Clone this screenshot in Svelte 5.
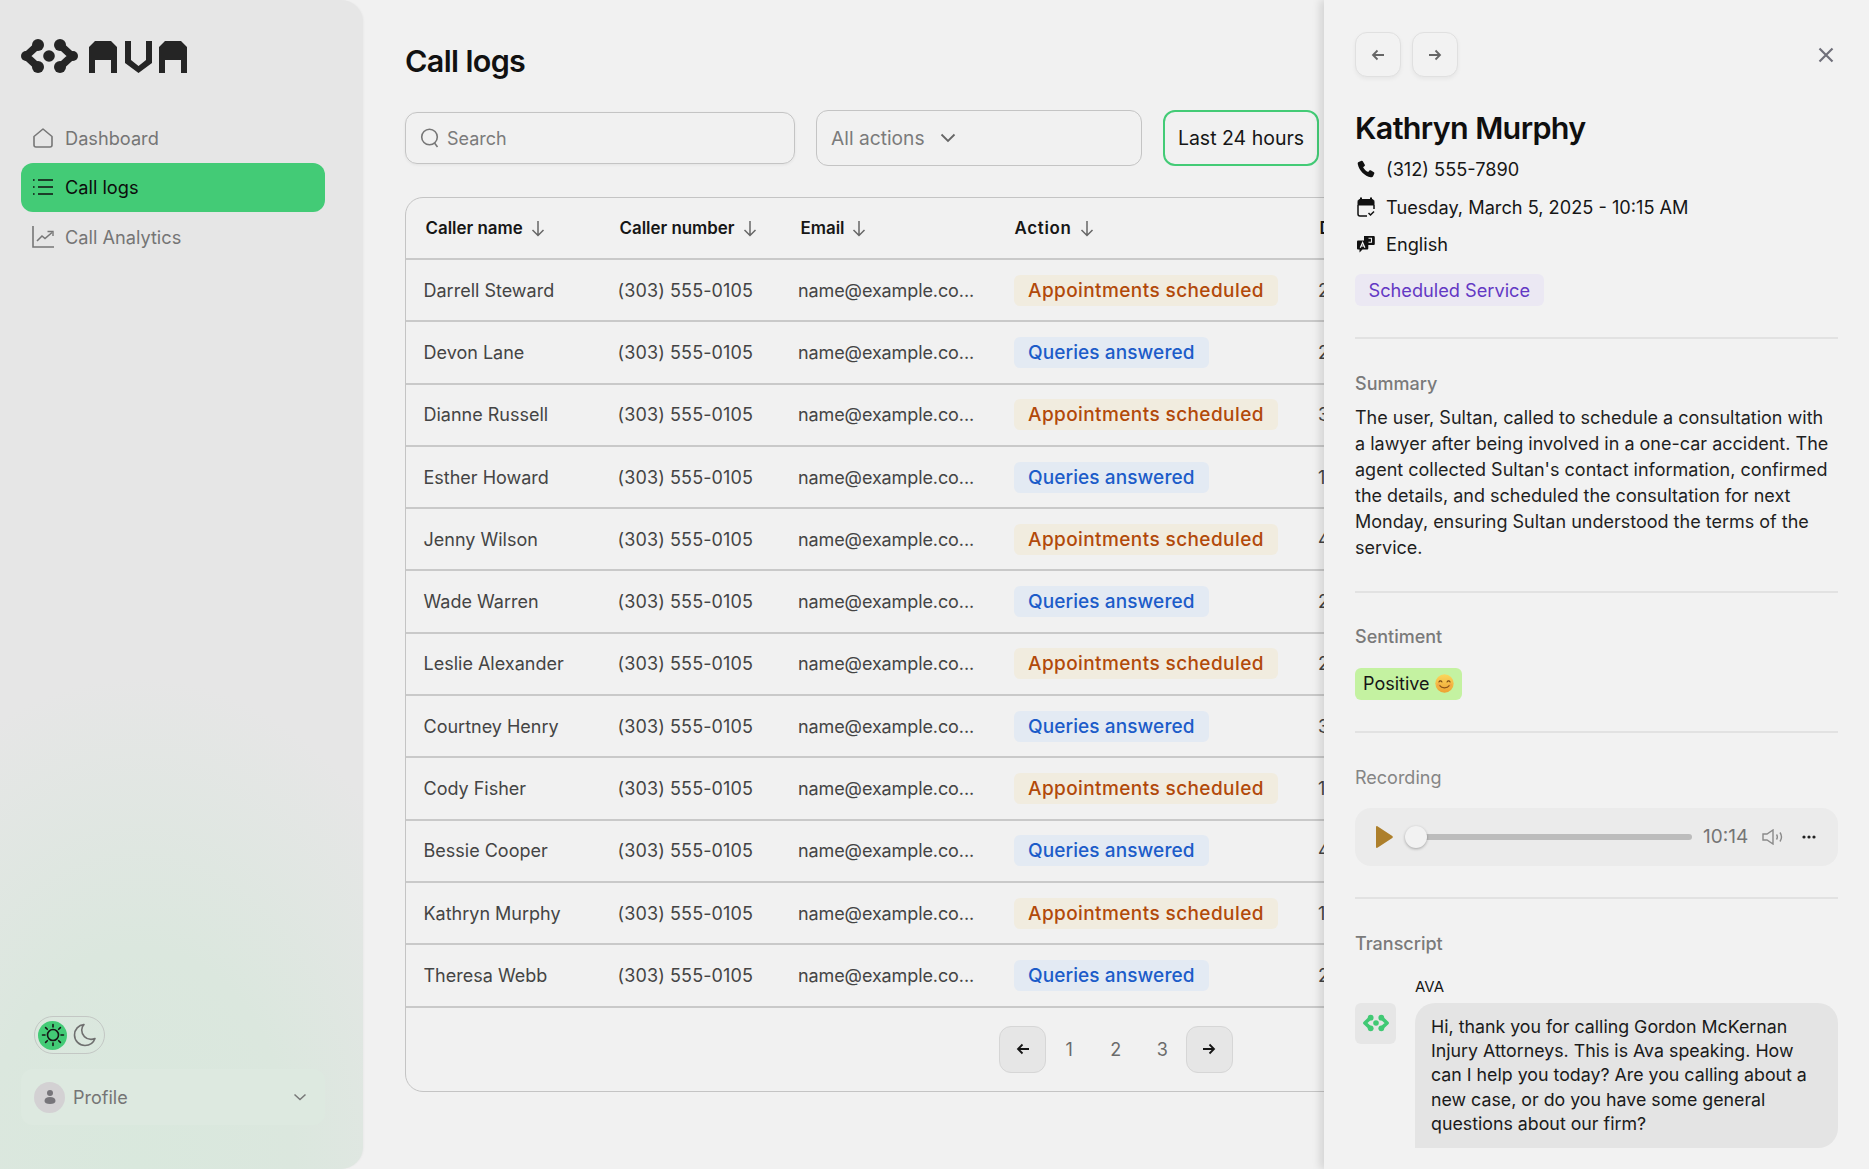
<script>
  const names = ['Darrell Steward','Devon Lane','Dianne Russell','Esther Howard','Jenny Wilson','Wade Warren','Leslie Alexander','Courtney Henry','Cody Fisher','Bessie Cooper','Kathryn Murphy','Theresa Webb'];
  const mins = ['2','2','3','1','4','2','2','3','1','4','1','2'];
  const rows = names.map((name, i) => ({ name, dur: mins[i] + 'm', appt: i % 2 === 0 }));
  const headers = ['Caller name','Caller number','Email','Action','Duration'];
</script>

<div class="page">
  <aside class="side">
    <svg class="logo" viewBox="20 38 170 38" width="170" height="38" aria-label="AVA">
      <g fill="none" stroke="#252525" stroke-width="7.5" stroke-linejoin="round" stroke-linecap="round">
        <polyline points="38,45 26,56 38,67" />
        <polyline points="60,45 72,56 60,67" />
      </g>
      <g fill="#252525">
        <circle cx="38" cy="45" r="6" /><circle cx="38" cy="67" r="6" /><circle cx="26" cy="56" r="5" />
        <circle cx="60" cy="45" r="6" /><circle cx="60" cy="67" r="6" /><circle cx="73" cy="56" r="5" />
        <circle cx="49" cy="56" r="5.8" />
        <polygon points="89,47 95,41 111,41 117,47 117,73 111,73 111,60 95,60 95,73 89,73" />
        <polygon points="125,41 131,41 131,60 138.5,66 146,60 146,41 152,41 152,63 138.5,73 125,63" />
        <polygon points="159,47 165,41 181,41 187,47 187,73 181,73 181,60 165,60 165,73 159,73" />
      </g>
    </svg>
    <nav class="nav">
      <div class="item">
        <svg width="22" height="22" viewBox="0 0 22 22" fill="none" stroke="#777" stroke-width="1.6" stroke-linejoin="round"><path d="M2 9.5 11 2l9 7.5V18a2 2 0 0 1-2 2H4a2 2 0 0 1-2-2z"/></svg>
        <span>Dashboard</span>
      </div>
      <div class="item active">
        <svg width="22" height="22" viewBox="0 0 22 22" fill="none" stroke="#111" stroke-width="1.7"><path d="M6 4h15M6 11h15M6 18h15"/><path d="M1 4h1.6M1 11h1.6M1 18h1.6"/></svg>
        <span>Call logs</span>
      </div>
      <div class="item">
        <svg width="22" height="22" viewBox="0 0 22 22" fill="none" stroke="#777" stroke-width="1.6"><path d="M1 0v21h21"/><path d="m5 15 5-5 3 2.5 7-6"/><path d="M15.5 5.500H21V10" stroke-width="1.4"/></svg>
        <span>Call Analytics</span>
      </div>
    </nav>
    <div class="bottom">
      <div class="toggle">
        <span class="sun">
          <svg width="24" height="24" viewBox="0 0 24 24" fill="none" stroke="#161616" stroke-width="1.6" stroke-linecap="round"><circle cx="12" cy="12" r="5.5"/><path d="M12 1.500v2.500M12 20v2.500M1.500 12H4M20 12h2.500M4.600 4.600l1.700 1.700M17.700 17.700l1.700 1.700M4.600 19.400l1.700-1.700M17.700 6.300l1.700-1.700"/></svg>
        </span>
        <svg width="24" height="24" viewBox="0 0 24 24" fill="none" stroke="#6f6f6f" stroke-width="1.6" stroke-linejoin="round"><path d="M11 1.500C5.500 2 1.500 6.500 1.500 12c0 5.800 4.700 10.500 10.500 10.500 4.500 0 8.500-2.800 10-7-1.200.6-2.600.9-4 .9-5.200 0-9.300-4.200-9.300-9.300 0-2.200.9-4.500 2.300-5.600z"/></svg>
      </div>
      <div class="profile">
        <span class="avatar">
          <svg width="14" height="16" viewBox="0 0 14 16" fill="#77757a"><circle cx="7" cy="4" r="3"/><path d="M1.500 12c0-2.500 2-4 5.500-4s5.500 1.500 5.500 4c0 2-2 3-5.500 3s-5.500-1-5.500-3z"/></svg>
        </span>
        <span class="pname">Profile</span>
        <svg class="chev" width="14" height="8" viewBox="0 0 14 8" fill="none" stroke="#777" stroke-width="1.5"><path d="m1.500 1.500 5.500 5 5.500-5"/></svg>
      </div>
    </div>
  </aside>

  <main class="main">
    <h1>Call logs</h1>
    <div class="tools">
      <div class="search">
        <svg width="20" height="22" viewBox="0 0 20 22" fill="none" stroke="#777" stroke-width="1.6"><circle cx="9.5" cy="10" r="7.8"/><path d="m14.500 16 3 4"/></svg>
        <span>Search</span>
      </div>
      <div class="select">
        <span>All actions</span>
        <svg width="16" height="10" viewBox="0 0 16 10" fill="none" stroke="#666" stroke-width="1.8"><path d="m1.500 1.500 6.500 6.500 6.500-6.500"/></svg>
      </div>
      <div class="range">Last 24 hours</div>
    </div>

    <div class="table">
      <div class="head">
        {#each headers as h}
          <div class="th">
            <span>{h}</span>
            <svg width="14" height="17" viewBox="0 0 14 17" fill="none" stroke="#666" stroke-width="1.5"><path d="M7 1v14.500M1.500 10 7 15.500 12.500 10"/></svg>
          </div>
        {/each}
      </div>
      {#each rows as r}
        <div class="row">
          <div>{r.name}</div>
          <div class="phone">(303) 555-0105</div>
          <div class="email">name@example.co...</div>
          <div><span class="badge" class:appt={r.appt} class:query={!r.appt}>{r.appt ? 'Appointments scheduled' : 'Queries answered'}</span></div>
          <div>{r.dur}</div>
        </div>
      {/each}
      <div class="pager">
        <button class="pbtn" aria-label="Previous">
          <svg width="14" height="12" viewBox="0 0 14 12" fill="none" stroke="#161616" stroke-width="1.8"><path d="M13 6H2M6.500 1.500 2 6l4.500 4.500"/></svg>
        </button>
        <span class="num">1</span><span class="num">2</span><span class="num">3</span>
        <button class="pbtn" aria-label="Next">
          <svg width="14" height="12" viewBox="0 0 14 12" fill="none" stroke="#161616" stroke-width="1.8"><path d="M1 6h11M7.500 1.500 12 6l-4.500 4.500"/></svg>
        </button>
      </div>
    </div>
  </main>

  <section class="panel">
    <div class="ptop">
      <button class="nbtn" aria-label="Previous">
        <svg width="14" height="12" viewBox="0 0 14 12" fill="none" stroke="#666" stroke-width="1.8"><path d="M13 6H2M6.500 1.500 2 6l4.500 4.500"/></svg>
      </button>
      <button class="nbtn" aria-label="Next">
        <svg width="14" height="12" viewBox="0 0 14 12" fill="none" stroke="#666" stroke-width="1.8"><path d="M1 6h11M7.500 1.500 12 6l-4.500 4.500"/></svg>
      </button>
      <svg class="close" width="16" height="16" viewBox="0 0 16 16" fill="none" stroke="#70707a" stroke-width="2.2"><path d="m1.500 1.500 13 13M14.500 1.500l-13 13"/></svg>
    </div>
    <h2>Kathryn Murphy</h2>
    <div class="meta first">
      <svg width="18" height="18" viewBox="0 0 18 18" fill="#111"><path d="M4.500.8 1.700 2C.8 2.400.6 3.200.8 4.200 2 10.300 7.700 16.100 13.800 17.300c1 .2 1.900-.1 2.300-1l1.200-2.700c.2-.5 0-1-.4-1.300l-3.200-2c-.4-.3-1-.2-1.300.2l-1.200 1.500C8.900 11 7 9 6.100 7.200l1.500-1.200c.4-.3.500-.9.200-1.300l-2-3.500C5.500.8 5 .6 4.500.8z"/></svg>
      <span>(312) 555-7890</span>
    </div>
    <div class="meta">
      <svg width="18" height="20" viewBox="0 0 18 20" fill="none"><path d="M4 .5v3M14 .5v3" stroke="#111" stroke-width="2"/><path d="M1 8V4.500C1 3.300 1.800 2.500 3 2.500h12c1.200 0 2 .8 2 2V8z" fill="#111" stroke="#111"/><path d="M1 8v9c0 1.200.8 2 2 2h7M17 8v4" stroke="#111" stroke-width="1.5"/><path d="m11.500 16 2 2 3.500-3.500" stroke="#111" stroke-width="1.5"/></svg>
      <span>Tuesday, March 5, 2025 - 10:15 AM</span>
    </div>
    <div class="meta">
      <svg width="18" height="18" viewBox="0 0 18 18"><path d="M7 1h9.500c.8 0 1.300.5 1.300 1.300v6.500c0 .8-.5 1.300-1.300 1.300H9V6H7z" fill="#111"/><path d="M1.300 5.500H10c.8 0 1.300.5 1.300 1.300v6.500c0 .8-.5 1.300-1.300 1.300H5.500L2.500 17.500v-2.900h-1.200c-.8 0-1.300-.5-1.300-1.300V6.800c0-.8.5-1.300 1.300-1.300z" fill="#111"/><path d="M3.300 12.800 5.600 7.500l2.300 5.300M4.200 11h2.800" fill="none" stroke="#f2f2f2" stroke-width="1.2"/><path d="M11.500 3.300h3v4h-3" fill="none" stroke="#f2f2f2" stroke-width="1.1"/></svg>
      <span>English</span>
    </div>
    <div class="tag">Scheduled Service</div>

    <hr class="d1" />
    <div class="label l1">Summary</div>
    <p class="summary">The user, Sultan, called to schedule a consultation with a lawyer after being involved in a one-car accident. The agent collected Sultan's contact information, confirmed the details, and scheduled the consultation for next Monday, ensuring Sultan understood the terms of the service.</p>

    <hr class="d2" />
    <div class="label l1 senti">Sentiment</div>
    <div class="positive">
      <span>Positive</span>
      <svg width="19" height="19" viewBox="0 0 18 18">
        <defs><linearGradient id="em" x1="0" y1="0" x2="0" y2="1"><stop offset="0" stop-color="#fbd75c"/><stop offset="1" stop-color="#eea232"/></linearGradient></defs>
        <circle cx="9" cy="9" r="8.7" fill="url(#em)"/>
        <path d="M3.700 7.500c.7-1.300 2.200-1.300 2.900 0M11.400 7.500c.7-1.300 2.200-1.300 2.900 0" fill="none" stroke="#7a4a14" stroke-width="1" stroke-linecap="round"/>
        <path d="M4.500 11c1.800 2.800 7.200 2.800 9 0" fill="none" stroke="#8a5318" stroke-width="1.100" stroke-linecap="round"/>
        <circle cx="3.400" cy="10.300" r="1.500" fill="#f0904a" opacity=".4"/><circle cx="14.600" cy="10.300" r="1.500" fill="#f0904a" opacity=".4"/>
      </svg>
    </div>

    <hr class="d3" />
    <div class="label l2">Recording</div>
    <div class="player">
      <svg class="play" width="17" height="22" viewBox="0 0 17 22" fill="#ad7f2b"><path d="M0 1v20c0 .8.700 1.200 1.400.8L16.300 12c.7-.4.700-1.500 0-2L1.400.2C.7-.2 0 .2 0 1z"/></svg>
      <div class="slider"><span class="thumb"></span></div>
      <span class="time">10:14</span>
      <svg class="vol" width="22" height="16" viewBox="0 0 22 16" fill="none" stroke="#8a8a8a" stroke-width="1.4"><path d="M1 5h4l6-4v14l-6-4H1z"/><path d="M14.500 5.500c1 1.500 1 3.500 0 5M18 3.500c2 3 2 6 0 9"/></svg>
      <svg class="dots" width="14" height="4" viewBox="0 0 14 4" fill="#222"><circle cx="2" cy="2" r="1.6"/><circle cx="7" cy="2" r="1.6"/><circle cx="12" cy="2" r="1.6"/></svg>
    </div>

    <hr class="d4" />
    <div class="label l1">Transcript</div>
    <div class="who">AVA</div>
    <div class="msg">
      <span class="bot">
        <svg width="28" height="18" viewBox="20 38 58 36">
          <g fill="none" stroke="#41c974" stroke-width="7.5" stroke-linejoin="round" stroke-linecap="round"><polyline points="38,45 26,56 38,67"/><polyline points="60,45 72,56 60,67"/></g>
          <g fill="#41c974"><circle cx="38" cy="45" r="6"/><circle cx="38" cy="67" r="6"/><circle cx="60" cy="45" r="6"/><circle cx="60" cy="67" r="6"/><circle cx="49" cy="56" r="5.8"/></g>
        </svg>
      </span>
      <div class="bubble">Hi, thank you for calling Gordon McKernan<br />Injury Attorneys. This is Ava speaking. How<br />can I help you today? Are you calling about a<br />new case, or do you have some general<br />questions about our firm?</div>
    </div>
  </section>
</div>

<style>
  :global(body) { margin: 0; background: #f1f1f1; font-family: Inter, "Noto Sans", sans-serif; overflow: hidden; }
  .page { position: relative; display: flex; height: 1169px; overflow: hidden; background: #f1f1f1; }
  .side {
    width: 363px; flex: none; box-sizing: border-box; padding: 38px 38px 44px 21px;
    display: flex; flex-direction: column; border-radius: 0 22px 22px 0;
    background: radial-gradient(ellipse 95% 42% at 38% 100%, #d9e8dd 0%, #dbe7de 45%, rgba(220,231,223,.5) 75%, rgba(230,230,230,0) 100%), #e6e6e6;
    box-shadow: 1px 0 2px rgba(0,0,0,.03);
  }
  .logo { display: block; margin-left: -1px; }
  .nav { margin-top: 37px; display: flex; flex-direction: column; gap: 0; }
  .item { height: 49.5px; display: flex; align-items: center; gap: 11px; padding-left: 11px; border-radius: 12px; font-size: 18.2px; color: #757575; }
  .item.active { background: #43cb76; color: #0c0c0c; }
  .bottom { margin-top: auto; }
  .toggle { width: 71px; height: 38px; box-sizing: border-box; margin-left: 13px; border: 1px solid #c3c7c4; border-radius: 19px; display: flex; align-items: center; gap: 6px; padding-left: 3px; }
  .sun { width: 29px; height: 29px; border-radius: 50%; background: #43cb76; display: flex; align-items: center; justify-content: center; }
  .profile { margin-top: 15px; height: 56px; border-radius: 12px; background: #dde9e0; display: flex; align-items: center; padding: 0 18px 0 13px; font-size: 18px; color: #757575; }
  .avatar { width: 31px; height: 31px; border-radius: 50%; background: #d3d1d3; display: flex; align-items: center; justify-content: center; }
  .pname { margin-left: 8px; }
  .chev { margin-left: auto; }

  .main { flex: 1; min-width: 0; padding: 37px 41px 0 42px; }
  h1 { margin: 0; font-size: 30.5px; line-height: 48px; font-weight: 600; letter-spacing: -0.65px; color: #111; }
  .tools { margin-top: 25px; display: flex; align-items: center; height: 56px; font-size: 18px; }
  .search { width: 390px; height: 52px; box-sizing: border-box; border: 1.5px solid #c4c4c4; border-radius: 12px; display: flex; align-items: center; gap: 7px; padding-left: 14px; color: #7b7b7b; box-shadow: 0 1px 3px rgba(0,0,0,.06); }
  .select { margin-left: 21px; width: 326px; height: 56px; box-sizing: border-box; border: 1.5px solid #c4c4c4; border-radius: 12px; display: flex; align-items: center; gap: 15px; padding-left: 14px; color: #7b7b7b; font-size: 19.2px; }
  .range { margin-left: 21px; width: 156px; height: 56px; box-sizing: border-box; border: 2px solid #43cb76; border-radius: 12px; display: flex; align-items: center; justify-content: center; color: #161616; font-size: 19.5px; }

  .table { margin-top: 31px; height: 895px; box-sizing: border-box; border: 1.5px solid #c4c4c4; border-radius: 18px; overflow: hidden; }
  .head, .row { display: grid; grid-template-columns: 194px 180.5px 216px 304px 200px; }
  .head { height: 60px; padding-left: 19.5px; align-items: center; grid-template-columns: 194px 181px 214px 305px 200px; font-size: 16.9px; font-weight: 600; color: #161616; }
  .th { display: flex; align-items: center; gap: 8px; }
  .th:nth-child(4) { letter-spacing: .7px; }
  .row { height: 62.3px; box-sizing: border-box; border-top: 2px solid #c9c9c9; padding-left: 17.5px; align-items: center; font-size: 18px; color: #444; }
  .phone { letter-spacing: .12px; }
  .email { letter-spacing: -.1px; }
  .badge { display: inline-block; line-height: 31px; padding: 0 14px; border-radius: 6px; font-weight: 500; font-size: 19px; white-space: nowrap; }
  .appt { background: #f1ecdf; color: #b2490a; letter-spacing: .41px; }
  .query { background: #e3eaf3; color: #1c5cc9; letter-spacing: .1px; }

  .pager { border-top: 2px solid #c9c9c9; height: 85px; display: flex; align-items: center; padding-left: 593px; box-sizing: border-box; font-size: 18px; color: #6b6b6b; }
  .pbtn { width: 47px; height: 47px; border: 1.5px solid #d6d6d6; border-radius: 12px; background: #e6e6e6; display: flex; align-items: center; justify-content: center; padding: 0; }
  .num { width: 46.5px; text-align: center; }

  .panel {
    position: absolute; top: 0; right: 0; bottom: 0; width: 545px; box-sizing: border-box; overflow: hidden;
    background: #f2f2f2; padding: 32px 31px 0; box-shadow: -4px 0 8px rgba(0,0,0,.12);
  }
  .ptop { display: flex; align-items: center; gap: 11px; height: 45px; }
  .nbtn { width: 46px; height: 45px; border: 1.5px solid #e0e0e0; border-radius: 12px; background: #f2f2f2; display: flex; align-items: center; justify-content: center; padding: 0; box-shadow: 0 2px 4px rgba(0,0,0,.05); }
  .close { margin-left: auto; margin-right: 4px; }
  h2 { margin: 27px 0 0; font-size: 30.5px; line-height: 48px; font-weight: 600; letter-spacing: -0.65px; color: #0f0f0f; }
  .meta { display: flex; align-items: center; gap: 11.5px; height: 37.5px; font-size: 18.2px; color: #161616; }
  .meta svg { flex: none; margin-left: 1.5px; }
  .meta.first { margin-top: -1.5px; }
  .tag { display: inline-block; margin-top: 11px; line-height: 32px; padding: 0 13.5px; border-radius: 6px; background: #ebe8f3; color: #6338c4; font-size: 18.2px; }
  hr { border: 0; height: 2px; background: #e2e2e2; margin: 0; }
  .d1 { margin-top: 31px; }
  .label { font-size: 18px; line-height: 26px; color: #7a7a7a; }
  .l1 { font-weight: 500; margin-top: 32px; }
  .senti { margin-top: 31px; }
  .l2 { font-weight: 400; color: #858585; margin-top: 32px; }
  .summary { margin: 8px 0 0; font-size: 18px; line-height: 25.9px; color: #1f1f1f; }
  .d2 { margin-top: 31px; }
  .positive { margin-top: 17.5px; height: 32px; width: 107px; border-radius: 6px; background: #c4f2a1; display: flex; align-items: center; gap: 5px; padding-left: 8px; box-sizing: border-box; font-size: 18px; color: #161616; }
  .d3 { margin-top: 31px; }
  .player { margin-top: 17px; height: 58px; border-radius: 16px; background: #ebebeb; display: flex; align-items: center; padding-left: 21px; }
  .slider { position: relative; margin-left: 16px; width: 283px; height: 6px; border-radius: 3px; background: #bcbcbc; }
  .thumb { position: absolute; left: -4px; top: -8px; width: 22px; height: 22px; border-radius: 50%; background: #f2f2f2; box-shadow: 0 1px 3px rgba(0,0,0,.3); }
  .time { margin-left: 11px; font-size: 19px; color: #757575; }
  .vol { margin-left: 14px; }
  .dots { margin-left: 18px; }
  .d4 { margin-top: 31px; }
  .who { margin: 20px 0 0 60px; font-size: 15px; line-height: 20px; color: #161616; }
  .msg { margin-top: 6px; display: flex; gap: 19px; align-items: flex-start; }
  .bot { width: 41px; height: 41px; flex: none; border-radius: 6px; background: #e6e6e6; display: flex; align-items: center; justify-content: center; }
  .bubble { flex: 1; box-sizing: border-box; padding: 12px 16px; border-radius: 20px 20px 20px 0; background: #e4e4e4; font-size: 17.8px; line-height: 24.2px; color: #1a1a1a; }
</style>
